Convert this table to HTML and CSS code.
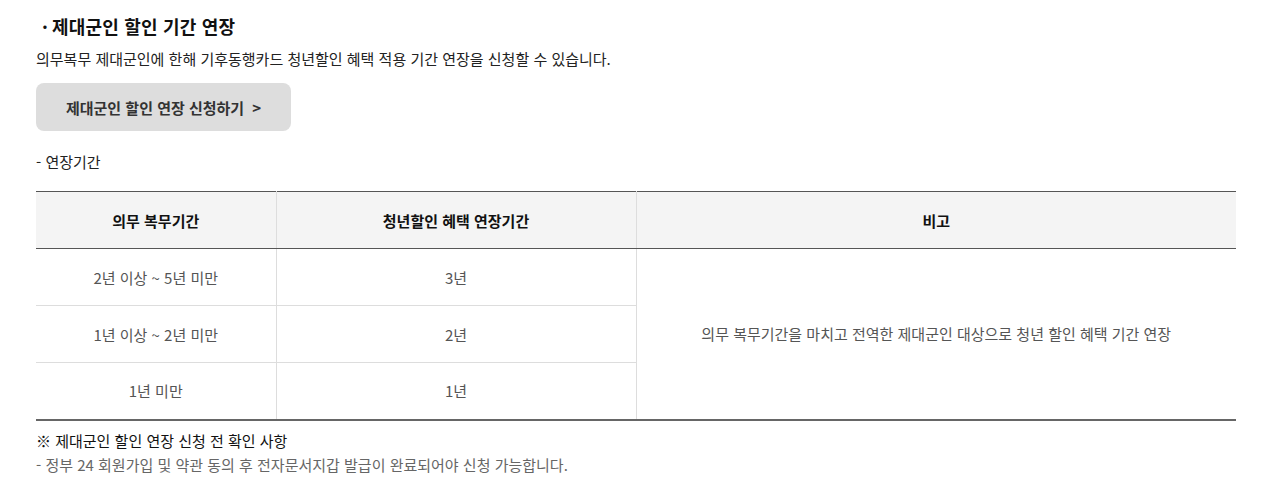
FILE: index.html
```html
<!DOCTYPE html>
<html lang="ko">
<head>
<meta charset="utf-8">
<link rel="stylesheet" href="styles.css">
</head>
<body>
<div class="wrap">
  <h3 class="title"><span class="dot">·</span>제대군인 할인 기간 연장</h3>
  <p class="desc">의무복무 제대군인에 한해 기후동행카드 청년할인 혜택 적용 기간 연장을 신청할 수 있습니다.</p>
  <a class="btn" href="#">제대군인 할인 연장 신청하기 <span class="arr">&gt;</span></a>
  <p class="sub">- 연장기간</p>
  <table class="tbl">
    <colgroup><col class="c1"><col class="c2"><col class="c3"></colgroup>
    <thead>
      <tr><th>의무 복무기간</th><th>청년할인 혜택 연장기간</th><th>비고</th></tr>
    </thead>
    <tbody>
      <tr><td>2년 이상 ~ 5년 미만</td><td>3년</td><td rowspan="3">의무 복무기간을 마치고 전역한 제대군인 대상으로 청년 할인 혜택 기간 연장</td></tr>
      <tr><td>1년 이상 ~ 2년 미만</td><td>2년</td></tr>
      <tr><td>1년 미만</td><td>1년</td></tr>
    </tbody>
  </table>
  <p class="note">※ 제대군인 할인 연장 신청 전 확인 사항</p>
  <p class="note-sub">- 정부 24 회원가입 및 약관 동의 후 전자문서지갑 발급이 완료되어야 신청 가능합니다.</p>
</div>
</body>
</html>
```

FILE: styles.css
```css
* { box-sizing: border-box; }
html, body { margin: 0; padding: 0; background: #fff; }
body {
  font-family: "Noto Sans CJK KR", "Noto Sans", sans-serif;
  color: #222;
}
.wrap { width: 1200px; margin-left: 36px; padding-top: 14px; }
.title {
  margin: 0;
  font-size: 18px;
  font-weight: 700;
  line-height: 24px;
  color: #111;
  letter-spacing: 0.2px;
}
.dot { display: inline-block; width: 10px; margin-left: 6px; font-weight: 700; }
.desc {
  margin: 10px 0 0;
  font-size: 15px;
  line-height: 22px;
  color: #222;
}
.btn {
  display: flex;
  align-items: center;
  justify-content: center;
  width: 255px;
  height: 48px;
  margin-top: 13px;
  background: #dddddd;
  border-radius: 8px;
  font-size: 15px;
  font-weight: 700;
  color: #333;
  text-decoration: none;
}
.arr { margin-left: 8px; }
.sub {
  margin: 20px 0 0;
  font-size: 15px;
  line-height: 22px;
  color: #222;
}
.tbl {
  margin-top: 18px;
  width: 1200px;
  border-collapse: collapse;
  table-layout: fixed;
  border-top: 1px solid #555;
  border-bottom: 2px solid #666;
  font-size: 15px;
}
.c1 { width: 240px; }
.c2 { width: 360px; }
.c3 { width: 600px; }
.tbl th {
  height: 57px;
  background: #f4f4f4;
  font-weight: 700;
  color: #111;
  border-bottom: 1px solid #555;
  border-left: 1px solid #ddd;
  text-align: center;
}
.tbl td {
  height: 57px;
  text-align: center;
  color: #555;
  border-bottom: 1px solid #ddd;
  border-left: 1px solid #ddd;
}
.tbl th:first-child, .tbl td:first-child { border-left: none; }
.tbl tbody tr:not(:first-child) td:first-child { border-left: none; }
.note {
  margin: 9px 0 0;
  font-size: 15px;
  line-height: 22px;
  color: #111;
}
.note-sub {
  margin: 2px 0 0;
  font-size: 15px;
  line-height: 22px;
  color: #666;
}
```
